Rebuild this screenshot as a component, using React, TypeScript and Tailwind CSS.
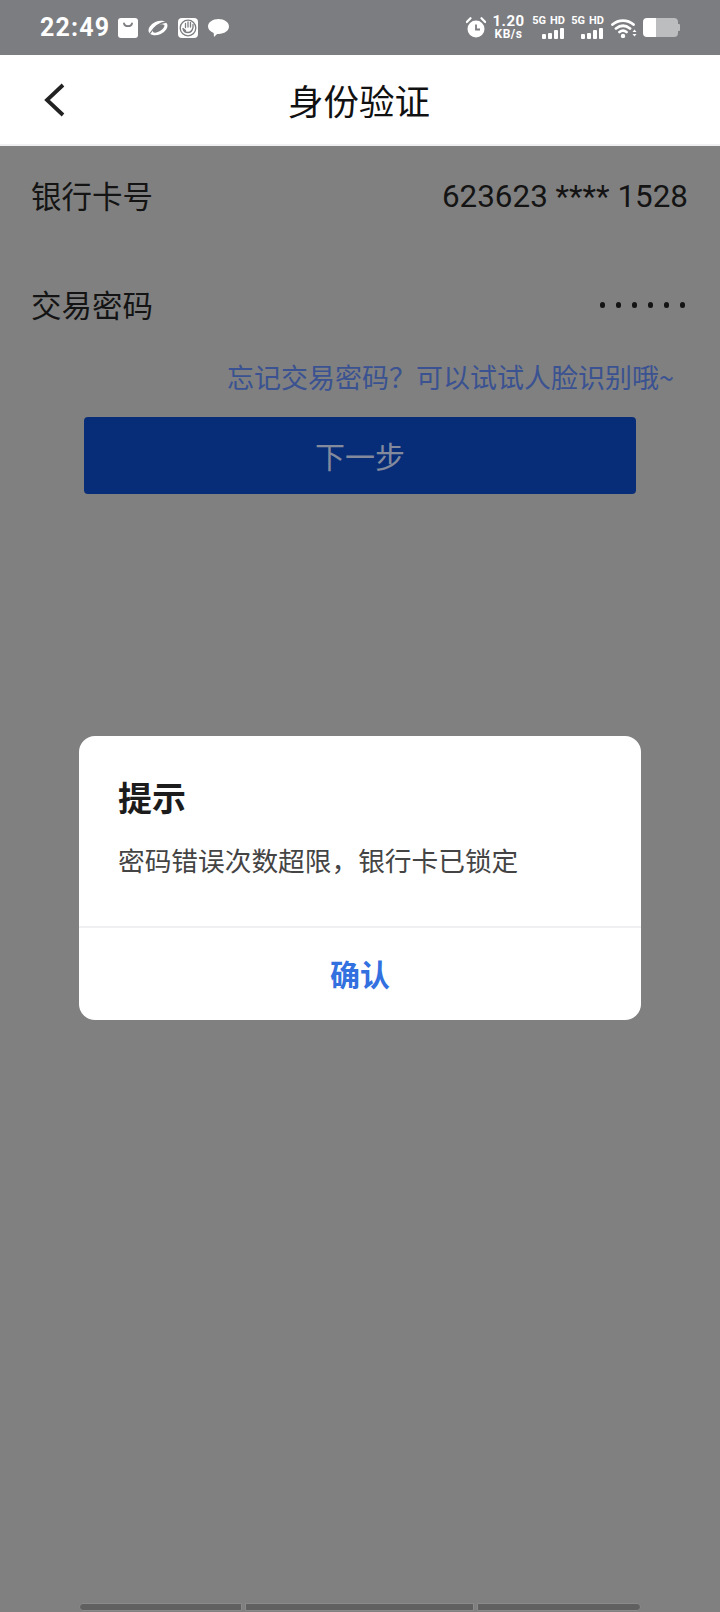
const cjk = { fontFamily: '"Noto Sans CJK SC", sans-serif' };

function BagIcon() {
  return (
    <svg width="20" height="20" viewBox="0 0 20 20">
      <path d="M3 0h14a3 3 0 0 1 3 3v14a3 3 0 0 1-3 3H3a3 3 0 0 1-3-3V3a3 3 0 0 1 3-3z" fill="#fff" />
      <path d="M6 5.500c.6 3.600 7.400 3.600 8 0" fill="none" stroke="#7c7d81" strokeWidth="1.800" strokeLinecap="round" />
    </svg>
  );
}

function PlanetIcon() {
  return (
    <svg width="20" height="18" viewBox="0 0 20 18">
      <ellipse cx="10" cy="9" rx="10" ry="6.500" transform="rotate(-25 10 9)" fill="#fff" />
      <ellipse cx="10.500" cy="9.500" rx="6.500" ry="3" transform="rotate(-30 10.500 9.500)" fill="#7c7d81" />
      <path d="M2 14.500C6 8 11 4 18 3" fill="none" stroke="#7c7d81" strokeWidth="1.300" />
    </svg>
  );
}

function HandIcon() {
  return (
    <svg width="20" height="20" viewBox="0 0 20 20" fill="none">
      <rect width="20" height="20" rx="4" fill="#fff" />
      <circle cx="10" cy="10" r="7.800" stroke="#7c7d81" strokeWidth="1.300" />
      <path d="M5 10.500c1 5 8.500 6 10-1V6.500M12.500 9V4.500M10 9V4M7.500 9.500V5.500M5 10.500l2.500 2" stroke="#7c7d81" strokeWidth="1.300" strokeLinecap="round" />
    </svg>
  );
}

function ChatIcon() {
  return (
    <svg width="21" height="20" viewBox="0 0 21 20">
      <path d="M10.500 1C16.300 1 21 4.300 21 8.600c0 4.300-4.700 7.400-10.500 7.400-.5 0-1 0-1.400-.1L6 19l-.3-4C2.300 13.800 0 11.500 0 8.600 0 4.300 4.700 1 10.500 1z" fill="#fff" />
    </svg>
  );
}

function AlarmIcon() {
  return (
    <svg width="20" height="21" viewBox="0 0 20 21" className="mr-[7px]">
      <circle cx="10" cy="12" r="8.500" fill="#fff" />
      <path d="M0.800 5 4.500 1.200M19.200 5 15.500 1.200" stroke="#fff" strokeWidth="2.200" strokeLinecap="round" />
      <path d="M10 7.500v5h4" fill="none" stroke="#7c7d81" strokeWidth="1.800" />
    </svg>
  );
}

function SimSignal() {
  return (
    <div className="flex flex-col items-center w-[33px]">
      <div className="flex gap-[4px] text-[11px] leading-[10px] font-bold text-white whitespace-nowrap" style={{ fontFamily: 'Roboto, sans-serif' }}>
        <span>5G</span>
        <span>HD</span>
      </div>
      <div className="flex items-end gap-[2px] h-[11px] mt-[2px] ml-[8px]">
        <div className="w-[4px] h-[5px] bg-white rounded-[1px]" />
        <div className="w-[4px] h-[6px] bg-white rounded-[1px]" />
        <div className="w-[4px] h-[9px] bg-white rounded-[1px]" />
        <div className="w-[4px] h-[11px] bg-white rounded-[1px]" />
      </div>
    </div>
  );
}

function WifiIcon() {
  return (
    <svg width="26" height="20" viewBox="0 0 26 20" fill="none" className="ml-[7px]">
      <path d="M1.500 6.500C7.500 1.200 16.500 1.200 22.500 6.500M5 10.500c4.500-3.600 9.500-3.600 14 0M8.500 14c2.400-1.800 4.600-1.800 7 0" stroke="#fff" strokeWidth="2.800" strokeLinecap="round" />
      <circle cx="12" cy="18" r="2.200" fill="#fff" />
      <path d="M21.500 14h4l-2-2.500zM21.500 16h4l-2 2.500z" fill="#fff" />
    </svg>
  );
}

function Battery() {
  return (
    <div className="flex items-center ml-[6px]">
      <div className="flex w-[35px] h-[19px] rounded-[4px] overflow-hidden">
        <div className="w-[13px] bg-white" />
        <div className="flex-1 bg-[#bcbdbf]" />
      </div>
      <div className="w-[2px] h-[7px] bg-[#bcbdbf] rounded-r-[1px]" />
    </div>
  );
}

function StatusBar() {
  return (
    <div className="h-[55px] bg-[#7c7d81] flex items-center pl-[40px] pr-[40px] shrink-0">
      <span className="text-[25px] font-bold text-white tracking-[1.200px] mr-[8px]" style={{ fontFamily: 'Roboto, sans-serif' }}>22:49</span>
      <div className="flex items-center gap-[10px]">
        <BagIcon />
        <PlanetIcon />
        <HandIcon />
        <ChatIcon />
      </div>
      <div className="ml-auto flex items-center">
        <AlarmIcon />
        <div className="flex flex-col items-center w-[31px] mr-[8px] font-bold text-white" style={{ fontFamily: 'Roboto, sans-serif' }}>
          <span className="text-[15px] leading-[13px] tracking-[0.500px]">1.20</span>
          <span className="text-[12px] leading-[12px] tracking-[0.500px]">KB/s</span>
        </div>
        <div className="flex gap-[6px]">
          <SimSignal />
          <SimSignal />
        </div>
        <WifiIcon />
        <Battery />
      </div>
    </div>
  );
}

export default function App() {
  return (
    <div className="relative h-[1612px] w-[720px] overflow-hidden bg-[#808080] flex flex-col" style={cjk}>
      <StatusBar />

      <div className="relative h-[91px] bg-white border-b-[2px] border-[#f0f0f2] flex items-center justify-center shrink-0">
        <svg width="24" height="38" viewBox="0 0 24 38" fill="none" className="absolute left-[42px] top-[26px]">
          <path d="M21 4 5 19l16 15" stroke="#222" strokeWidth="3.800" />
        </svg>
        <span className="text-[35.500px] text-[#111] -ml-[2px]">身份验证</span>
      </div>

      <div className="flex justify-between items-center pl-[31px] pr-[32px] h-[100px] text-[#141414]">
        <span className="text-[30.500px]">银行卡号</span>
        <span className="text-[31.400px] mt-[2px]" style={{ fontFamily: 'Roboto, sans-serif' }}>623623 **** 1528</span>
      </div>

      <div className="flex justify-between items-center pl-[31px] pr-[35px] h-[116px] text-[#141414]">
        <span className="text-[30.500px] mt-[2px]">交易密码</span>
        <div className="flex gap-[10.500px] mt-[2px]">
          {[0, 1, 2, 3, 4, 5].map((i) => (
            <div key={i} className="w-[5.500px] h-[5.500px] rounded-full bg-[#141414]" />
          ))}
        </div>
      </div>

      <div className="text-right pr-[46px] text-[27px] leading-[38px] text-[#3a5291] -mt-[4px] whitespace-nowrap">
        忘记交易密码{'\uFF1F'}可以试试人脸识别哦~
      </div>

      <div className="mx-[84px] mt-[21px] h-[77px] bg-[#082d78] rounded-[4px] flex items-center justify-center text-[30px] text-[#828a9c]">
        下一步
      </div>

      <div className="mt-auto flex gap-[3px] px-[79px] pb-[1px]">
        <div className="w-[164px] h-[8px] bg-[#606060] border border-[#8a8a8a] rounded-l-[4px]" />
        <div className="w-[229px] h-[8px] bg-[#606060] border border-[#8a8a8a]" />
        <div className="w-[165px] h-[8px] bg-[#606060] border border-[#8a8a8a] rounded-r-[4px]" />
      </div>

      <div className="absolute left-[79px] top-[736px] w-[562px] h-[284px] bg-white rounded-[16px] flex flex-col">
        <div className="h-[192px] border-b-[2px] border-[#f0f0f2] pl-[39px] pt-[37px]">
          <div className="text-[34px] leading-[48px] font-bold text-[#1c1c1c]">提示</div>
          <div className="mt-[19px] text-[26.700px] leading-[40px] text-[#444]">密码错误次数超限{'\uFF0C'}银行卡已锁定</div>
        </div>
        <div className="flex-1 flex items-center justify-center text-[30px] font-bold text-[#3370e0] pb-[2px]">确认</div>
      </div>
    </div>
  );
}
